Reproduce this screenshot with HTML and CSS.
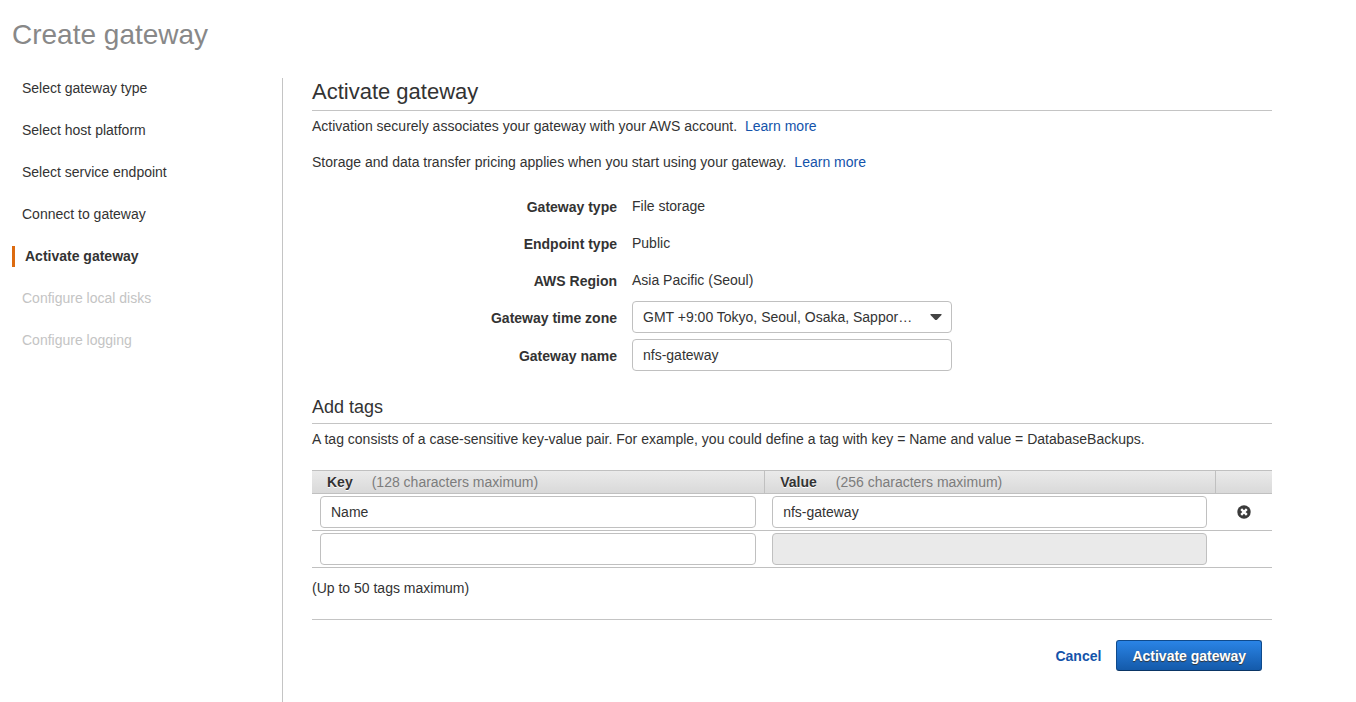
FILE: index.html
```html
<!DOCTYPE html>
<html lang="en">
<head>
<meta charset="utf-8">
<title>Create gateway</title>
<meta name="viewport" content="width=device-width, initial-scale=1">
<link rel="stylesheet" href="styles.css">
</head>
<body>
<h1 class="page-title">Create gateway</h1>
<div class="wizard">
  <nav class="steps" aria-label="Wizard steps">
    <ol class="step-list">
      <li class="step">Select gateway type</li>
      <li class="step">Select host platform</li>
      <li class="step">Select service endpoint</li>
      <li class="step">Connect to gateway</li>
      <li class="step step-current" aria-current="step">Activate gateway</li>
      <li class="step step-disabled">Configure local disks</li>
      <li class="step step-disabled">Configure logging</li>
    </ol>
  </nav>
  <main class="content">
    <h2 class="title">Activate gateway</h2>
    <p class="text">Activation securely associates your gateway with your AWS account. <a class="link" href="#">Learn more</a></p>
    <p class="text text-spaced">Storage and data transfer pricing applies when you start using your gateway. <a class="link" href="#">Learn more</a></p>
    <form>
      <div class="fields">
        <div class="field"><span class="label">Gateway type</span><span class="value">File storage</span></div>
        <div class="field"><span class="label">Endpoint type</span><span class="value">Public</span></div>
        <div class="field"><span class="label">AWS Region</span><span class="value">Asia Pacific (Seoul)</span></div>
        <div class="field">
          <label class="label" for="timezone">Gateway time zone</label>
          <div class="select-box">
            <select class="control select" id="timezone">
              <option>GMT +9:00 Tokyo, Seoul, Osaka, Sapporo, Yakutsk</option>
            </select>
            <svg class="caret" width="12" height="7" viewBox="0 0 12 7" aria-hidden="true"><path d="M1 0h10q1.200 0 .5 1L7.200 5.500q-1.200 1.200-2.400 0L.5 1Q-.2 0 1 0z" fill="#444"/></svg>
          </div>
        </div>
        <div class="field">
          <label class="label" for="name">Gateway name</label>
          <input class="control" id="name" type="text" value="nfs-gateway">
        </div>
      </div>
      <h3 class="subtitle">Add tags</h3>
      <p class="text">A tag consists of a case-sensitive key-value pair. For example, you could define a tag with key = Name and value = DatabaseBackups.</p>
      <table class="tags">
        <colgroup><col class="col-key"><col class="col-value"><col></colgroup>
        <thead>
          <tr>
            <th scope="col">Key<span class="limit">(128 characters maximum)</span></th>
            <th scope="col">Value<span class="limit">(256 characters maximum)</span></th>
            <th></th>
          </tr>
        </thead>
        <tbody>
          <tr>
            <td><input class="control" type="text" value="Name" aria-label="Key 1"></td>
            <td><input class="control" type="text" value="nfs-gateway" aria-label="Value 1"></td>
            <td class="remove-cell">
              <button class="remove" type="button" aria-label="Remove tag">
                <svg class="remove-icon" width="14" height="14" viewBox="0 0 14 14" aria-hidden="true"><circle cx="7" cy="7" r="6.700" fill="#3b3b3b"/><path d="M4.200 4.200l5.600 5.600M9.800 4.200l-5.600 5.600" stroke="#fff" stroke-width="2.400"/></svg>
              </button>
            </td>
          </tr>
          <tr>
            <td><input class="control" type="text" aria-label="Key 2"></td>
            <td><input class="control" type="text" aria-label="Value 2" disabled></td>
            <td></td>
          </tr>
        </tbody>
      </table>
      <p class="text note">(Up to 50 tags maximum)</p>
      <div class="actions">
        <a class="cancel" href="#">Cancel</a>
        <button class="submit" type="submit">Activate gateway</button>
      </div>
    </form>
  </main>
</div>
</body>
</html>
```
FILE: styles.css
```css
* {
  box-sizing: border-box;
}

body {
  margin: 0;
  padding: 16px 12px 0;
  min-height: 100vh;
  display: flex;
  flex-direction: column;
  background: #fff;
  color: #333;
  font: 14px/20px "Liberation Sans", Arial, sans-serif;
}

.page-title {
  margin: 0 0 24px;
  color: #888;
  font-size: 28px;
  font-weight: 400;
  line-height: 38px;
}

.wizard {
  flex: 1;
  display: flex;
}

.steps {
  flex: 0 0 271px;
  border-right: 1px solid #c4c4c4;
}

.step-list {
  margin: 0;
  padding: 0;
  list-style: none;
  display: flex;
  flex-direction: column;
  gap: 21px;
}

.step {
  padding-left: 10px;
  line-height: 21px;
}

.step-current {
  border-left: 3px solid #dd6b10;
  font-weight: 700;
}

.step-disabled {
  color: #c4c4c4;
}

.content {
  flex: 1;
  min-width: 0;
  max-width: 989px;
  padding-left: 29px;
}

.title,
.subtitle {
  border-bottom: 1px solid #c4c4c4;
  font-weight: 400;
}

.title {
  margin: 0 0 5px;
  padding-bottom: 4px;
  font-size: 22px;
  line-height: 28px;
}

.subtitle {
  margin: 24px 0 5px;
  padding-bottom: 4px;
  font-size: 18px;
  line-height: 24px;
}

.text {
  margin: 0;
}

.text-spaced {
  margin-top: 16px;
}

.link,
.cancel {
  color: #1453aa;
  text-decoration: none;
}

.link {
  margin-left: 4px;
}

.fields {
  margin-top: 18px;
  display: flex;
  flex-direction: column;
  gap: 6px;
}

.field {
  min-height: 31px;
  display: grid;
  grid-template-columns: 305px minmax(0, 320px);
  column-gap: 15px;
  align-items: center;
}

.label {
  padding-top: 2px;
  font-weight: 700;
  text-align: right;
}

.control {
  display: block;
  width: 100%;
  height: 32px;
  padding: 0 10px;
  border: 1px solid #c0c0c0;
  border-radius: 4px;
  background: #fff;
  color: #333;
  font: inherit;
}

.control:disabled {
  background: #eaeaea;
}

.select-box {
  position: relative;
}

.select {
  appearance: none;
  padding-right: 38px;
  text-overflow: ellipsis;
}

.caret {
  position: absolute;
  top: 13px;
  right: 10px;
  pointer-events: none;
}

.tags {
  width: 100%;
  margin-top: 21px;
  border-collapse: separate;
  border-spacing: 0;
  table-layout: fixed;
}

.col-key {
  width: 47.1%;
}

.col-value {
  width: 47%;
}

.tags th {
  height: 24px;
  padding: 0 15px;
  border-top: 1px solid #c0c0c0;
  border-bottom: 1px solid #c0c0c0;
  background: linear-gradient(#eaeaea, #d9d9d9);
  text-align: left;
  text-shadow: 0 1px 0 #fff;
}

.tags th + th {
  border-left: 1px solid #c0c0c0;
}

.limit {
  margin-left: 19px;
  color: #7c7c7c;
  font-weight: 400;
  text-shadow: none;
}

.tags td {
  padding: 2px 8px;
  border-bottom: 1px solid #c0c0c0;
}

.remove {
  display: block;
  margin: 0 auto;
  padding: 0;
  border: 0;
  background: none;
}

.remove-icon {
  display: block;
}

.note {
  margin-top: 10px;
}

.actions {
  margin-top: 21px;
  padding: 20px 10px;
  border-top: 1px solid #c4c4c4;
  display: flex;
  justify-content: flex-end;
  align-items: center;
  gap: 15px;
}

.cancel {
  font-weight: 700;
}

.submit {
  height: 31px;
  padding: 0 15px;
  border: 1px solid #0f4a8c;
  border-bottom-color: #0a3565;
  border-radius: 3px;
  background: linear-gradient(#2a84e6, #145aaa);
  color: #fff;
  font: inherit;
  font-weight: 700;
  text-shadow: 0 1px 1px #333;
}
```
